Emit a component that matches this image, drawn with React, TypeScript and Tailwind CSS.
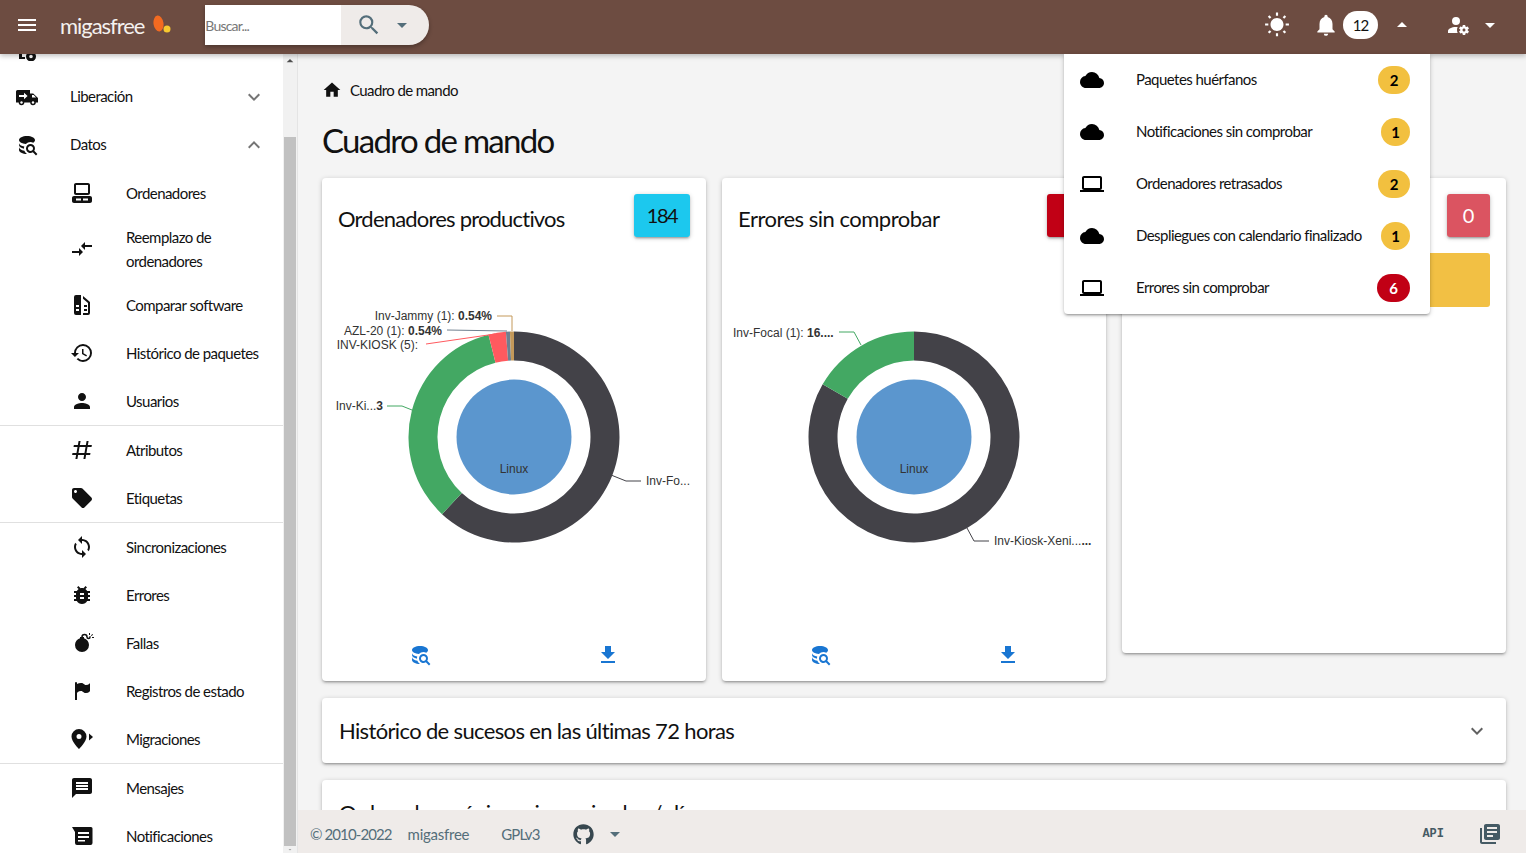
import React from "react";
import { FaGithub } from "react-icons/fa";
import {
  MdArrowDropDown,
  MdArrowDropUp,
  MdBugReport,
  MdCloud,
  MdCompareArrows,
  MdDownload,
  MdExpandLess,
  MdExpandMore,
  MdHistory,
  MdHome,
  MdLaptop,
  MdLibraryBooks,
  MdLocalOffer,
  MdMenu,
  MdMessage,
  MdNotifications,
  MdPerson,
  MdSearch,
  MdSync,
  MdWbSunny,
} from "react-icons/md";

type IconProps = { className?: string };

const cardShadow =
  "shadow-[0_1px_5px_rgba(0,0,0,0.2),0_2px_2px_rgba(0,0,0,0.14),0_3px_1px_-2px_rgba(0,0,0,0.12)]";

function DatabaseSearch({ className }: IconProps) {
  return (
    <svg viewBox="0 0 24 24" fill="currentColor" className={className}>
      <path d="M18.68 12.32C16.92 10.56 14.07 10.56 12.32 12.32C10.56 14.07 10.56 16.93 12.32 18.68C13.81 20.17 16.11 20.4 17.85 19.25L21 22.39L22.39 21L19.25 17.87C20.4 16.12 20.17 13.81 18.68 12.32M17.27 17.27C16.29 18.25 14.71 18.25 13.73 17.27C12.75 16.29 12.75 14.71 13.73 13.73C14.71 12.75 16.29 12.75 17.27 13.73C18.25 14.71 18.25 16.29 17.27 17.27M10.9 20.1C10.25 19.44 9.74 18.65 9.42 17.78C6.27 17.25 4 15.76 4 14V17C4 19.21 7.58 21 12 21C11.6 20.74 11.23 20.44 10.9 20.1M4 9V12C4 13.68 6.07 15.12 9 15.7C9 15.63 9 15.57 9 15.5C9 14.84 9.1 14.19 9.28 13.56C6.27 13.03 4 11.66 4 10V9M12 3C7.58 3 4 4.79 4 7C4 9 7 10.68 10.85 11H10.9C12.1 9.74 13.76 9 15.5 9C16.41 9.03 17.31 9.25 18.14 9.64C19.28 9.13 20 8.32 20 7C20 4.79 16.42 3 12 3Z" />
    </svg>
  );
}

function AccountCog({ className }: IconProps) {
  return (
    <svg viewBox="0 0 24 24" fill="currentColor" className={className}>
      <path d="M10 4A4 4 0 0 0 6 8A4 4 0 0 0 10 12A4 4 0 0 0 14 8A4 4 0 0 0 10 4M17 12C16.87 12 16.76 12.09 16.74 12.21L16.55 13.53C16.25 13.66 15.96 13.82 15.7 14L14.46 13.5C14.35 13.5 14.22 13.5 14.15 13.63L13.15 15.36C13.09 15.47 13.11 15.6 13.21 15.68L14.27 16.5C14.25 16.67 14.24 16.83 14.24 17C14.24 17.17 14.25 17.33 14.27 17.5L13.21 18.32C13.12 18.4 13.09 18.53 13.15 18.64L14.15 20.37C14.21 20.5 14.34 20.5 14.46 20.5L15.7 20C15.96 20.18 16.24 20.35 16.55 20.47L16.74 21.79C16.76 21.91 16.86 22 17 22H19C19.11 22 19.22 21.91 19.24 21.79L19.43 20.47C19.73 20.34 20 20.18 20.27 20L21.5 20.5C21.63 20.5 21.76 20.5 21.83 20.37L22.83 18.64C22.89 18.53 22.86 18.4 22.77 18.32L21.7 17.5C21.72 17.33 21.74 17.17 21.74 17C21.74 16.83 21.73 16.67 21.7 16.5L22.76 15.68C22.85 15.6 22.88 15.47 22.82 15.36L21.82 13.63C21.76 13.5 21.63 13.5 21.5 13.5L20.27 14C20 13.82 19.73 13.65 19.42 13.53L19.23 12.21C19.22 12.09 19.11 12 19 12H17M10 14C5.58 14 2 15.79 2 18V20H11.68A7 7 0 0 1 11 17A7 7 0 0 1 11.64 14.09C11.11 14.03 10.56 14 10 14M18 15.5C18.83 15.5 19.5 16.17 19.5 17C19.5 17.83 18.83 18.5 18 18.5C17.16 18.5 16.5 17.83 16.5 17C16.5 16.17 17.17 15.5 18 15.5Z" />
    </svg>
  );
}

function TruckFast({ className }: IconProps) {
  return (
    <svg viewBox="0 0 24 24" fill="currentColor" className={className}>
      <path d="M2.500 5H15v3.500h3.200L23 13v4.500h-2.200a2.800 2.800 0 0 1-5.600 0H9.300a2.800 2.800 0 0 1-5.600 0H1V6.500A1.500 1.500 0 0 1 2.500 5z" />
      <path d="M17 10v2.600h4l-2.300-2.600z" fill="#fff" />
      <path d="M4 10h5V7.800l3.600 3.200L9 14.200V12H4z" fill="#fff" />
      <circle cx="6.500" cy="17.500" r="1.200" fill="#fff" />
      <circle cx="18" cy="17.500" r="1.200" fill="#fff" />
    </svg>
  );
}

function DesktopClassic({ className }: IconProps) {
  return (
    <svg viewBox="0 0 24 24" fill="currentColor" className={className}>
      <path
        fillRule="evenodd"
        d="M6 2C4.890 2 4 2.890 4 4V12C4 13.110 4.890 14 6 14H18C19.110 14 20 13.110 20 12V4C20 2.890 19.110 2 18 2H6M6 4H18V12H6V4M4 15C2.890 15 2 15.890 2 17V20C2 21.110 2.890 22 4 22H20C21.110 22 22 21.110 22 20V17C22 15.890 21.110 15 20 15H4M6 17.500H11V19.500H6V17.500M13 17.500H18V19.500H13V17.500Z"
      />
    </svg>
  );
}

function CompareSoftware({ className }: IconProps) {
  return (
    <svg viewBox="0 0 24 24" fill="currentColor" className={className}>
      <path
        fillRule="evenodd"
        d="M6 2h5v20H6a2 2 0 0 1-2-2V4a2 2 0 0 1 2-2zM6 12v2h3v-2zM6 16v2h3v-2z"
      />
      <path
        fillRule="evenodd"
        d="M13 3l7 6v11a2 2 0 0 1-2 2h-5v-2h5V10l-5-4.200zM14 12h3v2h-3zM14 16h3v2h-3z"
      />
    </svg>
  );
}

function MapMarkerRight({ className }: IconProps) {
  return (
    <svg viewBox="0 0 24 24" fill="currentColor" className={className}>
      <path
        fillRule="evenodd"
        d="M9 2a7.500 7.500 0 0 0-7.500 7.500C1.500 14.800 9 22 9 22s7.500-7.200 7.500-12.500A7.500 7.500 0 0 0 9 2zm0 5a2.500 2.500 0 1 1 0 5 2.500 2.500 0 0 1 0-5z"
      />
      <path d="M19 6.500v7l4-3.500z" />
    </svg>
  );
}

function NotificationTray({ className }: IconProps) {
  return (
    <svg viewBox="0 0 24 24" fill="currentColor" className={className}>
      <path
        fillRule="evenodd"
        d="M2 3h19a1.500 1.500 0 0 1 1.500 1.500V19a2 2 0 0 1-2 2H7a2 2 0 0 1-2-2V8zM8 8v2h11V8zM8 12v2h11v-2zM8 16v1.500h7V16z"
      />
    </svg>
  );
}

function Pound({ className }: IconProps) {
  return (
    <svg viewBox="0 0 24 24" fill="currentColor" className={className}>
      <path d="M5.410 21L6.120 17H2.120L2.470 15H6.470L7.530 9H3.530L3.880 7H7.880L8.590 3H10.590L9.880 7H15.880L16.590 3H18.590L17.880 7H21.880L21.530 9H17.530L16.470 15H20.470L20.120 17H16.120L15.410 21H13.410L14.120 17H8.120L7.410 21H5.410M9.530 9L8.470 15H14.470L15.530 9H9.530Z" />
    </svg>
  );
}

function Bomb({ className }: IconProps) {
  return (
    <svg viewBox="0 0 24 24" fill="currentColor" className={className}>
      <path d="M11.250 6A3.250 3.250 0 0 1 14.500 2.750A3.250 3.250 0 0 1 17.750 6C17.750 6.420 18.080 6.750 18.500 6.750C18.920 6.750 19.250 6.420 19.250 6V5.250H20.750V6A2.250 2.250 0 0 1 18.500 8.250A2.250 2.250 0 0 1 16.250 6A1.750 1.750 0 0 0 14.500 4.250A1.750 1.750 0 0 0 12.750 6H14V7.290C16.890 8.150 19 10.830 19 14A7 7 0 0 1 12 21A7 7 0 0 1 5 14C5 10.830 7.110 8.150 10 7.290V6H11.250M22 6H24V7H22V6M19 4V2H20V4H19M20.910 4.380L22.330 2.960L23.040 3.670L21.620 5.090L20.910 4.380Z" />
    </svg>
  );
}

function FlagVariant({ className }: IconProps) {
  return (
    <svg viewBox="0 0 24 24" fill="currentColor" className={className}>
      <path d="M6 3A1 1 0 0 1 7 4V4.880C8.060 4.440 9.500 4 11 4C14 4 14 6 16 6C19 6 20 4 20 4V12C20 12 19 14 16 14C13 14 13 12 11 12C8 12 7 14 7 14V21H5V4A1 1 0 0 1 6 3Z" />
    </svg>
  );
}

// only the bottom of this one shows under the header
function DeployIcon({ className }: IconProps) {
  return (
    <svg viewBox="0 0 24 24" fill="currentColor" className={className}>
      <path d="M4 14h3v6h3v2H4z" />
      <path
        fillRule="evenodd"
        d="M16 14.500a5 5 0 1 1 0 10 5 5 0 0 1 0-10zm0 3.200a1.800 1.800 0 1 0 0 3.600 1.800 1.800 0 0 0 0-3.600z"
      />
    </svg>
  );
}

const sidebarGroups: { icon: React.ReactNode; label: string }[][] = [
  [
    { icon: <DesktopClassic className="w-6 h-6" />, label: "Ordenadores" },
    { icon: <MdCompareArrows className="w-6 h-6" />, label: "Reemplazo de ordenadores" },
    { icon: <CompareSoftware className="w-6 h-6" />, label: "Comparar software" },
    { icon: <MdHistory className="w-6 h-6" />, label: "Histórico de paquetes" },
    { icon: <MdPerson className="w-6 h-6" />, label: "Usuarios" },
  ],
  [
    { icon: <Pound className="w-6 h-6" />, label: "Atributos" },
    { icon: <MdLocalOffer className="w-6 h-6" />, label: "Etiquetas" },
  ],
  [
    { icon: <MdSync className="w-6 h-6" />, label: "Sincronizaciones" },
    { icon: <MdBugReport className="w-6 h-6" />, label: "Errores" },
    { icon: <Bomb className="w-6 h-6" />, label: "Fallas" },
    { icon: <FlagVariant className="w-6 h-6" />, label: "Registros de estado" },
    { icon: <MapMarkerRight className="w-6 h-6" />, label: "Migraciones" },
  ],
  [
    { icon: <MdMessage className="w-6 h-6" />, label: "Mensajes" },
    { icon: <NotificationTray className="w-6 h-6" />, label: "Notificaciones" },
  ],
];

const alerts = [
  { icon: "cloud", label: "Paquetes huérfanos", count: 2, bg: "bg-[#f2c03f] text-black", width: "w-8" },
  { icon: "cloud", label: "Notificaciones sin comprobar", count: 1, bg: "bg-[#f2c03f] text-black", width: "w-[29px]" },
  { icon: "laptop", label: "Ordenadores retrasados", count: 2, bg: "bg-[#f2c03f] text-black", width: "w-8" },
  { icon: "cloud", label: "Despliegues con calendario finalizado", count: 1, bg: "bg-[#f2c03f] text-black", width: "w-[29px]" },
  { icon: "laptop", label: "Errores sin comprobar", count: 6, bg: "bg-[#c10015] text-white", width: "w-[33px]" },
];

function polar(cx: number, cy: number, r: number, deg: number) {
  const a = ((deg - 90) * Math.PI) / 180;
  return [cx + r * Math.cos(a), cy + r * Math.sin(a)];
}

function arc(cx: number, cy: number, outer: number, inner: number, from: number, to: number) {
  const large = to - from > 180 ? 1 : 0;
  const [x1, y1] = polar(cx, cy, outer, from);
  const [x2, y2] = polar(cx, cy, outer, to);
  const [x3, y3] = polar(cx, cy, inner, to);
  const [x4, y4] = polar(cx, cy, inner, from);
  return `M${x1} ${y1}A${outer} ${outer} 0 ${large} 1 ${x2} ${y2}L${x3} ${y3}A${inner} ${inner} 0 ${large} 0 ${x4} ${y4}Z`;
}

type Segment = { from: number; to: number; color: string };

function Donut({ segments, children }: { segments: Segment[]; children: React.ReactNode }) {
  return (
    <svg viewBox="0 0 384 360" className="block w-[384px] h-[360px] font-['Liberation_Sans',sans-serif]">
      {segments.map((s) => (
        <path key={s.from} d={arc(192, 184, 105.5, 76.5, s.from, s.to)} fill={s.color} />
      ))}
      <circle cx="192" cy="184" r="57.5" fill="#5b96ce" />
      <text x="192" y="219.500" textAnchor="middle" fontSize="12" fill="#333">
        Linux
      </text>
      {children}
    </svg>
  );
}

function ChartFooter() {
  return (
    <div className="h-[68px] pt-4 flex items-center text-[#1976d2]">
      <div className="flex-1 flex justify-center pl-[4px]">
        <DatabaseSearch className="w-6 h-6" />
      </div>
      <div className="flex-1 flex justify-center pr-[4px]">
        <MdDownload className="w-6 h-6" />
      </div>
    </div>
  );
}

function ChartCard({
  title,
  titleClass,
  count,
  badge,
  children,
}: {
  title: string;
  titleClass: string;
  count: number;
  badge: string;
  children: React.ReactNode;
}) {
  return (
    <div className={`bg-white rounded ${cardShadow}`}>
      <div className="flex items-start justify-between p-4">
        <h2 className={`text-[22px] leading-[49px] h-[43px] text-[#111] ${titleClass}`}>{title}</h2>
        <div className={`h-[43px] pb-[2px] rounded-[3px] flex items-center justify-center text-[20px] tracking-[-1.5px] ${badge} ${cardShadow}`}>
          {count}
        </div>
      </div>
      {children}
    </div>
  );
}

export default function App() {
  return (
    <div className="relative h-[853px] w-[1526px] overflow-hidden flex flex-col bg-[#f4f4f4] text-[#111] font-['Lato',sans-serif]">
      <header className="relative z-20 h-[54px] shrink-0 bg-[#6d4c41] text-white flex items-center pb-1 shadow-[0_2px_5px_rgba(0,0,0,0.25)]">
        <MdMenu className="w-6 h-6 ml-[15px]" />
        <span className="ml-[21px] text-[22px] tracking-[-1.05px] text-[#f4f1ef]">migasfree</span>
        <svg viewBox="0 0 20 20" className="ml-[8px] w-[20px] h-[20px]">
          <ellipse cx="6.500" cy="8.500" rx="5" ry="8" fill="#f26a21" transform="rotate(-8 6.500 8.500)" />
          <circle cx="15" cy="14" r="3.500" fill="#f7c92f" />
        </svg>
        <div className="ml-[33px] flex h-10 w-[224px] rounded-r-[20px] overflow-hidden shadow-[0_2px_4px_rgba(0,0,0,0.3)]">
          <div className="w-[136px] bg-white text-[#777] text-[14px] tracking-[-0.8px] flex items-center">Buscar...</div>
          <div className="flex-1 bg-[#efebe9] flex items-center text-[#546e7a]">
            <MdSearch className="w-[26px] h-[26px] ml-[15px]" />
            <MdArrowDropDown className="w-6 h-6 ml-[8px]" />
          </div>
        </div>
        <div className="flex-1" />
        <MdWbSunny className="w-[26px] h-[26px]" />
        <MdNotifications className="w-[26px] h-[26px] ml-[23px]" />
        <span className="ml-[4px] w-[35px] h-[28px] rounded-full bg-white text-[#111] text-[15px] tracking-[-1px] flex items-center justify-center">
          12
        </span>
        <MdArrowDropUp className="w-6 h-6 ml-[12px]" />
        <AccountCog className="w-6 h-6 ml-[32px]" />
        <MdArrowDropDown className="w-6 h-6 ml-[8px] mr-[24px]" />

        <div className={`absolute left-[1064px] top-[54px] w-[366px] rounded-b bg-white text-[#111] ${cardShadow}`}>
          {alerts.map((a) => (
            <div key={a.label} className="h-[52px] flex items-center pl-4 pr-5">
              {a.icon === "cloud" ? <MdCloud className="w-6 h-6 text-black" /> : <MdLaptop className="w-6 h-6 text-black" />}
              <span className="ml-8 flex-1 text-[15px] tracking-[-0.55px] -mt-[1px]">{a.label}</span>
              <span className={`${a.width} h-[28px] rounded-full flex items-center justify-center text-[15px] font-bold ${a.bg}`}>
                {a.count}
              </span>
            </div>
          ))}
        </div>
      </header>

      <div className="flex-1 flex min-h-0">
        <aside className="w-[298px] shrink-0 flex bg-white border-r border-[#e4e4e4]">
          <nav className="w-[283px] shrink-0 overflow-hidden text-[15px] tracking-[-0.55px]">
            <div className="h-[19px] overflow-hidden flex items-end">
              <div className="h-[48px] shrink-0 flex items-center pl-[15px]">
                <DeployIcon className="w-6 h-6" />
                <span className="ml-[31px] -mt-[7px]">Despliegues</span>
              </div>
            </div>
            <div className="h-[48px] flex items-center pl-[15px] pr-[17px]">
              <TruckFast className="w-6 h-6" />
              <span className="ml-[31px] flex-1 -mt-[1px]">Liberación</span>
              <MdExpandMore className="w-6 h-6 text-[#757575]" />
            </div>
            <div className="h-[48px] flex items-center pl-[15px] pr-[17px]">
              <DatabaseSearch className="w-6 h-6" />
              <span className="ml-[31px] flex-1 -mt-[1px]">Datos</span>
              <MdExpandLess className="w-6 h-6 text-[#757575]" />
            </div>
            {sidebarGroups.map((group, i) => (
              <div key={i} className={i < sidebarGroups.length - 1 ? "border-b border-[#e0e0e0]" : ""}>
                {group.map((item) => (
                  <div key={item.label} className="min-h-[48px] flex items-center pl-[70px] pr-4 py-2">
                    <span className="w-6 shrink-0 flex justify-center">{item.icon}</span>
                    <span className="ml-8 w-[135px] leading-[24px]">{item.label}</span>
                  </div>
                ))}
              </div>
            ))}
          </nav>
          <div className="w-[14px] bg-[#f1f1f1] flex flex-col items-center">
            <MdArrowDropUp className="w-4 h-4 mt-[-1px] text-[#505050]" />
            <div className="mt-[68px] flex-1 w-3 bg-[#c1c1c1]" />
            <MdArrowDropDown className="w-4 h-[7px] text-[#a3a3a3]" />
          </div>
        </aside>

        <div className="flex-1 min-w-0 flex flex-col">
          <main className="flex-1 min-h-0 overflow-hidden pl-6 pr-5 pt-[24px]">
            <div className="h-6 flex items-center text-[15px] tracking-[-0.6px]">
              <MdHome className="w-5 h-5 mr-[8px]" />
              Cuadro de mando
            </div>
            <h1 className="mt-[13px] h-[51px] text-[33px] leading-[50px] tracking-[-1.7px]">Cuadro de mando</h1>
            <div className="mt-3 grid grid-cols-3 gap-4 items-start">
              <ChartCard
                title="Ordenadores productivos"
                titleClass="tracking-[-0.8px]"
                count={184}
                badge="w-[56px] bg-[#1cc8ee] text-[#111]"
              >
                <Donut
                  segments={[
                    { from: 0, to: 223, color: "#434248" },
                    { from: 223, to: 346, color: "#43a863" },
                    { from: 346, to: 355.6, color: "#ff5a5f" },
                    { from: 355.6, to: 357.8, color: "#6f7f8f" },
                    { from: 357.8, to: 360, color: "#c4995a" },
                  ]}
                >
                  <polyline points="175,63 190,63 190,78" fill="none" stroke="#c4995a" />
                  <text x="170" y="67" textAnchor="end" fontSize="12" fill="#333">
                    Inv-Jammy (1): <tspan fontWeight="700">0.54%</tspan>
                  </text>
                  <polyline points="125,77 185,78" fill="none" stroke="#6f7f8f" />
                  <text x="120" y="81.500" textAnchor="end" fontSize="12" fill="#333">
                    AZL-20 (1): <tspan fontWeight="700">0.54%</tspan>
                  </text>
                  <polyline points="104,91 173,81" fill="none" stroke="#ff5a5f" />
                  <text x="96" y="96" textAnchor="end" fontSize="12" fill="#333">
                    INV-KIOSK (5):
                  </text>
                  <polyline points="65,153 80,153 90,157" fill="none" stroke="#43a863" />
                  <text x="61" y="157" textAnchor="end" fontSize="12" fill="#333">
                    Inv-Ki...<tspan fontWeight="700">3</tspan>
                  </text>
                  <polyline points="289,222 304,228 319,228" fill="none" stroke="#434248" />
                  <text x="324" y="232" fontSize="12" fill="#333">
                    Inv-Fo...
                  </text>
                </Donut>
                <ChartFooter />
              </ChartCard>

              <ChartCard
                title="Errores sin comprobar"
                titleClass="tracking-[-0.5px]"
                count={6}
                badge="w-[43px] bg-[#c10015] text-white"
              >
                <Donut
                  segments={[
                    { from: 0, to: 300, color: "#434248" },
                    { from: 300, to: 360, color: "#43a863" },
                  ]}
                >
                  <polyline points="117,79 132,79 139,92" fill="none" stroke="#43a863" />
                  <text x="11" y="84" fontSize="12" fill="#333">
                    Inv-Focal (1): <tspan fontWeight="700">16....</tspan>
                  </text>
                  <polyline points="245,275 252,288 267,288" fill="none" stroke="#434248" />
                  <text x="272" y="292" fontSize="12" fill="#333">
                    Inv-Kiosk-Xeni...<tspan fontWeight="700">...</tspan>
                  </text>
                </Donut>
                <ChartFooter />
              </ChartCard>

              <div className={`bg-white rounded h-[475px] ${cardShadow}`}>
                <div className="flex justify-end p-4">
                  <div className={`w-[43px] h-[43px] pb-[2px] rounded-[3px] bg-[#db5461] text-white text-[20px] flex items-center justify-center ${cardShadow}`}>
                    0
                  </div>
                </div>
                <div className="mx-4 h-[54px] rounded-[3px] bg-[#f2c044]" />
              </div>
            </div>

            <div className={`mt-[17px] h-[65px] bg-white rounded flex items-center justify-between pl-[17px] pr-[17px] ${cardShadow}`}>
              <h2 className="text-[22px] tracking-[-0.65px]">Histórico de sucesos en las últimas 72 horas</h2>
              <MdExpandMore className="w-6 h-6 text-[#616161]" />
            </div>
            <div className={`mt-[17px] h-[65px] bg-white rounded flex items-center pl-[17px] ${cardShadow}`}>
              <h2 className="text-[22px] tracking-[-0.65px]">Ordenadores únicos sincronizados / día</h2>
            </div>
          </main>

          <footer className="h-[43px] shrink-0 pt-[5px] bg-[#efebe9] text-[#546e7a] text-[15px] flex items-center pl-3 pr-[24px]">
            <span className="tracking-[-0.9px]">© 2010-2022</span>
            <span className="ml-4 tracking-[-0.25px]">migasfree</span>
            <span className="ml-8 tracking-[-0.9px]">GPLv3</span>
            <FaGithub className="w-[21px] h-[21px] ml-[33px] text-[#37474f]" />
            <MdArrowDropDown className="w-6 h-6 ml-[9px]" />
            <div className="flex-1" />
            <span className="text-[12px] font-bold font-['Liberation_Mono',monospace] text-[#455a64]">API</span>
            <MdLibraryBooks className="w-6 h-6 ml-[34px] text-[#455a64]" />
          </footer>
        </div>
      </div>
    </div>
  );
}
